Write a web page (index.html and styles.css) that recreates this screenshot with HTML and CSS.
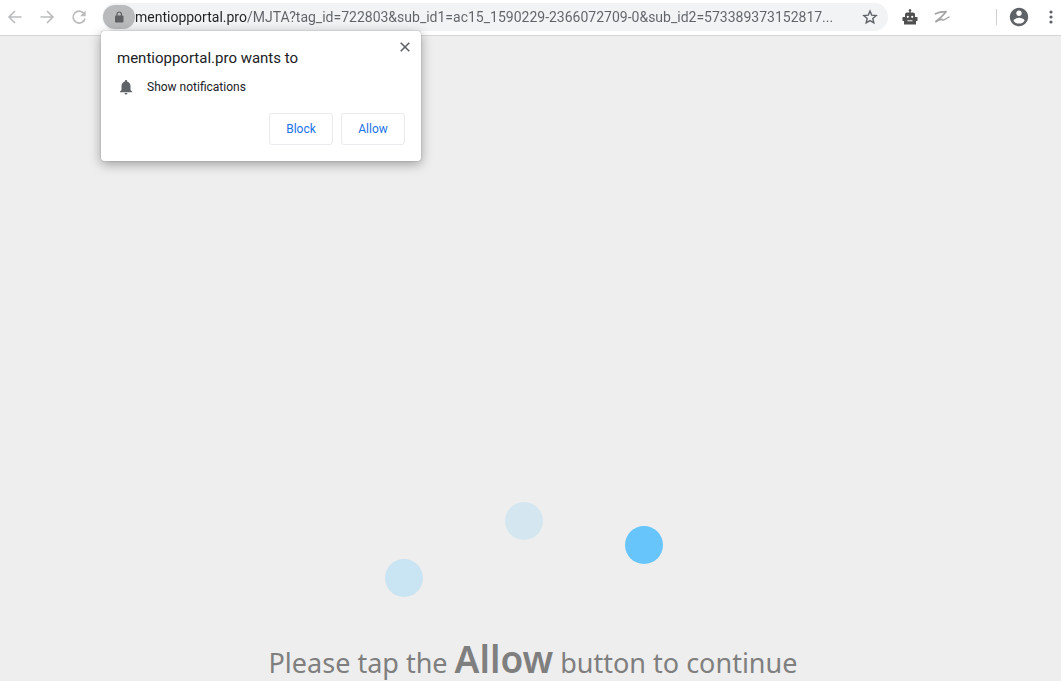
FILE: index.html
```html
<!DOCTYPE html>
<html lang="en">
<head>
  <meta charset="UTF-8" />
  <meta name="viewport" content="width=device-width, initial-scale=1.0"/>
  <title>mentiopportal.pro</title>
  <link rel="stylesheet" href="styles.css">
</head>
<body>
  <header class="toolbar">
    <nav class="nav-buttons">
      <button class="icon-btn" aria-label="Back">
        <svg width="16" height="16" viewBox="0 0 16 16" fill="none" stroke="#babcbe" stroke-width="1.6"><path d="M14.5 8H2M8 2L2 8l6 6"/></svg>
      </button>
      <button class="icon-btn" aria-label="Forward">
        <svg width="16" height="16" viewBox="0 0 16 16" fill="none" stroke="#babcbe" stroke-width="1.6"><path d="M1.500 8H14M8 2l6 6-6 6"/></svg>
      </button>
      <button class="icon-btn" aria-label="Reload">
        <svg width="16" height="16" viewBox="0 0 16 16"><path d="M13.200 4.800A6 6 0 1 0 14 9.500" fill="none" stroke="#babcbe" stroke-width="1.700"/><path d="M14.700 1.500v5.700H9z" fill="#babcbe"/></svg>
      </button>
    </nav>

    <div class="address-bar">
      <button class="lock-btn" aria-label="View site information">
        <svg width="10" height="12" viewBox="0 0 10 12"><rect x="1" y="4.500" width="8.500" height="7" rx="1" fill="#5f6063"/><path d="M3 5V3.200a2.200 2.200 0 0 1 4.400 0V5" fill="none" stroke="#5f6063" stroke-width="1.200"/></svg>
      </button>
      <input class="url" type="text" aria-label="Address" value="mentiopportal.pro/MJTA?tag_id=722803&amp;sub_id1=ac15_1590229-2366072709-0&amp;sub_id2=573389373152817..." />
      <button class="star-btn" aria-label="Bookmark this page">
        <svg width="16" height="16" viewBox="0 0 16 16" fill="none" stroke="#5f6368" stroke-width="1.400"><path d="M8 2l1.700 4.100 4.500.4-3.400 3 1 4.400L8 11.600l-3.800 2.300 1-4.400-3.400-3 4.500-.4z"/></svg>
      </button>

      <section class="permission" role="dialog" aria-labelledby="permissionTitle">
        <button class="close-btn" aria-label="Close">
          <svg width="10" height="10" viewBox="0 0 10 10" stroke="#5f6368" stroke-width="1.600"><path d="M.7.7l8.600 8.600M9.300.7L.7 9.300"/></svg>
        </button>
        <h1 class="permission-title" id="permissionTitle">mentiopportal.pro wants to</h1>
        <p class="permission-item">
          <svg width="18" height="18" viewBox="0 0 24 24" fill="#5f6368"><path d="M12 22c1.100 0 2-.9 2-2h-4c0 1.100.9 2 2 2zm6-6v-5c0-3.070-1.640-5.640-4.500-6.320V4c0-.83-.67-1.500-1.500-1.500s-1.500.67-1.500 1.500v.68C7.630 5.360 6 7.920 6 11v5l-2 2v1h16v-1l-2-2z"/></svg>
          <span>Show notifications</span>
        </p>
        <div class="permission-buttons">
          <button>Block</button>
          <button>Allow</button>
        </div>
      </section>
    </div>

    <div class="extensions">
      <button class="icon-btn" aria-label="Robot extension">
        <svg width="18" height="18" viewBox="0 0 18 18"><path d="M8.300 4.500V3.500a1.300 1.300 0 1 1 1.400 0v1H12a2 2 0 0 1 2 2V9h2.500v4H15v3.500H3V13H1.500V9H4V6.500a2 2 0 0 1 2-2z" fill="#505050"/><circle cx="6.800" cy="8.800" r="1.100" fill="#fff"/><circle cx="11.200" cy="8.800" r="1.100" fill="#fff"/><path d="M6.500 12.700h5" stroke="#ddd" stroke-width="1.200"/></svg>
      </button>
      <button class="icon-btn" aria-label="Z extension">
        <svg width="18" height="18" viewBox="0 0 18 18" fill="none" stroke="#a3a3a3" stroke-linecap="round" stroke-linejoin="round"><path d="M2.500 5.800C6 4.200 9 3.800 13 3.700C10.500 7 7 10.200 3 13.500" stroke-width="1.700"/><path d="M3 13.500C6 12 8 11 9 11.200C8.500 13.200 12 11.700 16 9" stroke-width="1.500"/></svg>
      </button>
    </div>

    <div class="profile">
      <button class="icon-btn" aria-label="Profile">
        <svg width="22" height="22" viewBox="0 0 24 24" fill="#5f6368"><path d="M12 2C6.480 2 2 6.480 2 12s4.480 10 10 10 10-4.480 10-10S17.520 2 12 2zm0 3c1.660 0 3 1.340 3 3s-1.340 3-3 3-3-1.340-3-3 1.340-3 3-3zm0 14.200c-2.500 0-4.710-1.280-6-3.220.03-1.990 4-3.080 6-3.080 1.990 0 5.970 1.090 6 3.080-1.290 1.940-3.500 3.220-6 3.220z"/></svg>
      </button>
      <button class="icon-btn" aria-label="Menu">
        <svg width="4" height="16" viewBox="0 0 4 16" fill="#5f6368"><circle cx="2" cy="3" r="1.600"/><circle cx="2" cy="8" r="1.600"/><circle cx="2" cy="13" r="1.600"/></svg>
      </button>
    </div>
  </header>

  <main class="page">
    <div class="loader">
      <span class="dot dot-low"></span>
      <span class="dot dot-high"></span>
      <span class="dot dot-active"></span>
    </div>
    <p class="message">Please tap the <strong>Allow</strong> button to continue</p>
  </main>
</body>
</html>
```
FILE: styles.css
```css
* {
  box-sizing: border-box;
}

body {
  margin: 0;
  height: 100vh;
  display: flex;
  flex-direction: column;
  overflow: hidden;
  background-color: #eee;
  font-family: Roboto, "Liberation Sans", sans-serif;
}

button {
  padding: 0;
  border: none;
  background: none;
  cursor: pointer;
}

svg {
  display: block;
}

.toolbar {
  display: flex;
  align-items: center;
  height: 36px;
  padding-bottom: 1px;
  background-color: #fff;
  border-bottom: 1px solid #d6d6d6;
}

.nav-buttons {
  display: flex;
  gap: 8px;
  padding: 0 11px 0 3px;
}

.icon-btn {
  display: flex;
  align-items: center;
  justify-content: center;
  width: 24px;
  height: 24px;
}

/* Address bar */
.address-bar {
  position: relative;
  flex: 1;
  display: flex;
  align-items: center;
  height: 28px;
  padding: 0 10px 0 1px;
  border-radius: 14px;
  background-color: #f1f3f4;
}

.lock-btn {
  display: flex;
  align-items: center;
  justify-content: center;
  width: 32px;
  height: 24px;
  border-radius: 12px;
  background-color: #b9babc;
}

.url {
  flex: 1;
  min-width: 0;
  padding: 0;
  border: none;
  outline: none;
  font-family: inherit;
  font-size: 14px;
  line-height: 20px;
  color: #5f6368;
  /* host part is darker than the path */
  background: linear-gradient(to right, #202124 112px, #5f6368 112px);
  -webkit-background-clip: text;
  background-clip: text;
  -webkit-text-fill-color: transparent;
}

/* Permission bubble */
.permission {
  position: absolute;
  z-index: 1;
  top: 28px;
  left: -1px;
  width: 320px;
  padding: 16px;
  border-radius: 3px;
  background-color: #fff;
  box-shadow: 0 0 1px rgba(0, 0, 0, 0.5), 0 3px 12px rgba(0, 0, 0, 0.35);
  color: #202124;
}

.close-btn {
  position: absolute;
  top: 11px;
  right: 11px;
}

.permission-title {
  margin: 0 0 8px;
  font-size: 15px;
  line-height: 22px;
  font-weight: 400;
}

.permission-item {
  display: flex;
  align-items: center;
  gap: 12px;
  margin: 0 0 16px;
  font-size: 12px;
  line-height: 20px;
}

.permission-buttons {
  display: flex;
  justify-content: flex-end;
  gap: 8px;
}

.permission-buttons button {
  width: 64px;
  height: 32px;
  border: 1px solid #e8eaed;
  border-radius: 3px;
  font-family: inherit;
  font-size: 12px;
  color: #1a73e8;
}

.extensions {
  display: flex;
  gap: 8px;
  padding: 0 42px 0 10px;
}

.profile {
  display: flex;
  align-items: center;
  gap: 8px;
  padding-left: 10px;
  border-left: 1px solid #d0d0d0;
  height: 16px;
}

.profile .icon-btn:last-child {
  margin-right: -2px;
}

/* Page content */
.page {
  flex: 1;
  display: flex;
  flex-direction: column;
  justify-content: flex-end;
  align-items: center;
}

.loader {
  display: flex;
  gap: 82px;
  height: 95px;
  margin-right: 13px;
}

.dot {
  width: 38px;
  height: 38px;
  border-radius: 50%;
}

.dot-low {
  align-self: flex-end;
  background-color: #c9e4f2;
}

.dot-high {
  background-color: #d4e7f0;
}

.dot-active {
  margin-top: 24px;
  background-color: #67c5fc;
}

.message {
  margin: 44px 0 0 5px;
  font-family: "Noto Sans", sans-serif;
  font-size: 27px;
  line-height: 36px;
  color: #7f7f7f;
}

.message strong {
  font-size: 37px;
  font-weight: 600;
}
```
